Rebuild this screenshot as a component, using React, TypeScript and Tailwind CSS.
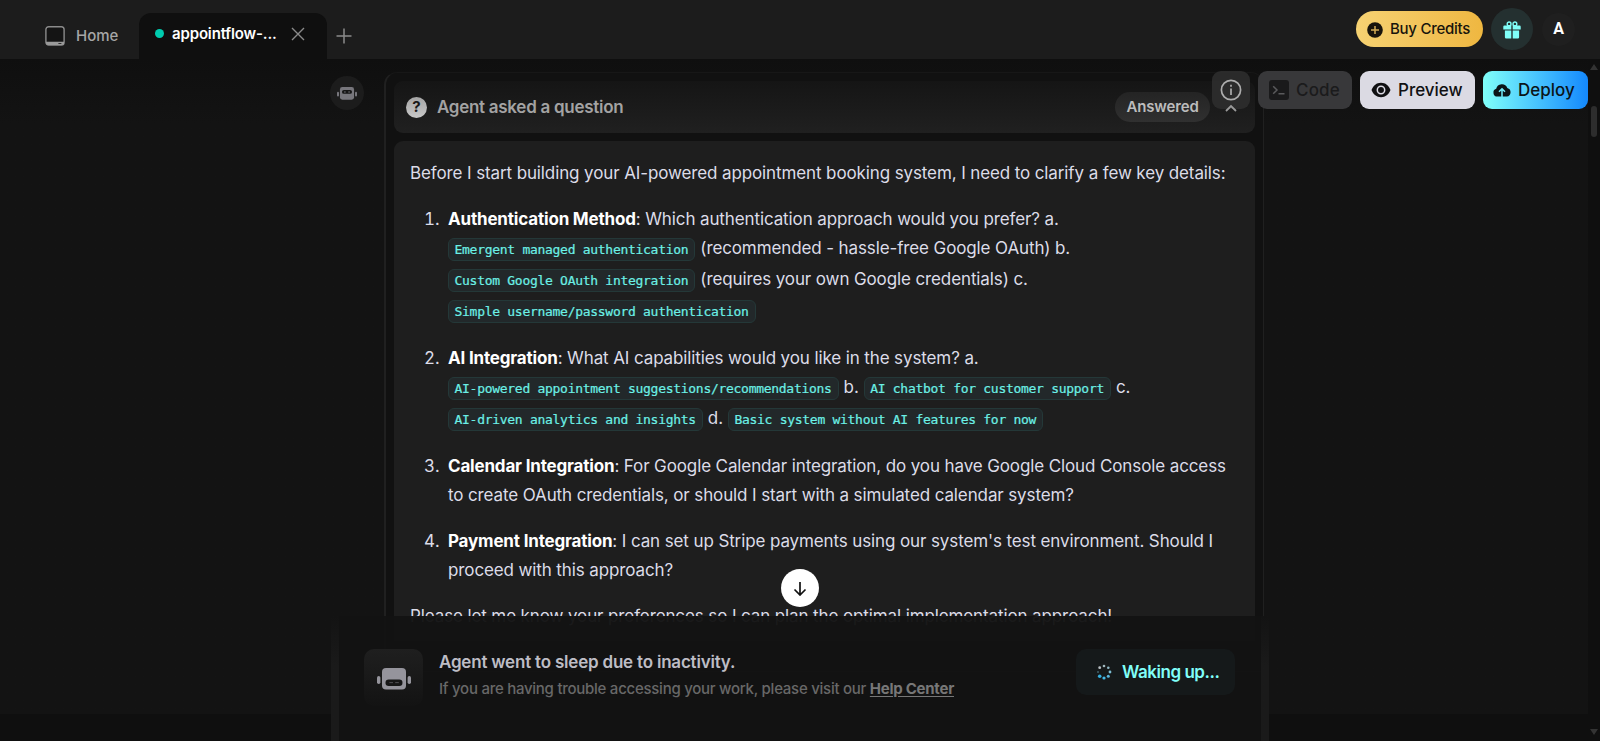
import type { ReactNode } from "react";

const Code = ({ children }: { children: ReactNode }) => (
  <code className="inline-flex h-[23px] items-center rounded-md border border-[#243838] bg-[#22282a] pr-1.5 pl-[5.5px] font-['DejaVu_Sans_Mono',monospace] text-[13px] leading-none tracking-[-0.285px] text-[#6cf0e6] [-webkit-text-stroke:0.2px_#6cf0e6]">
    {children}
  </code>
);

const Row = ({ children }: { children: ReactNode }) => (
  <div className="flex h-[29px] items-center whitespace-pre">{children}</div>
);

const CodeRow = ({ children }: { children: ReactNode }) => (
  <div className="flex h-[31px] items-center gap-[5px] whitespace-pre [&>span]:-translate-y-px">{children}</div>
);

const Item = ({ n, children }: { n: number; children: ReactNode }) => (
  <li className="flex">
    <span className="flex h-[29px] w-[38px] items-center pl-[14px] tabular-nums">{n}.</span>
    <div>{children}</div>
  </li>
);

const Strong = ({ children }: { children: ReactNode }) => (
  <strong className="font-bold tracking-[-0.18px] text-white">{children}</strong>
);

const Robot = ({ className, sleeping }: { className: string; sleeping?: boolean }) => (
  <svg viewBox="0 0 34 22" className={className} fill="currentColor">
    <rect x="0" y="8" width="3.4" height="8" rx="1.7" />
    <rect x="30.6" y="8" width="3.4" height="8" rx="1.7" />
    <rect x="5" y="0" width="24" height="21.5" rx="4" />
    <rect x="8.5" y={sleeping ? 11.5 : 5} width="17" height="6.5" rx="3.2" fill="#161616" />
    {sleeping ? (
      <g>
        <rect x="12.4" y="14.2" width="3.6" height="0.9" opacity="0.5" />
        <rect x="18.2" y="14.2" width="3.6" height="0.9" opacity="0.5" />
      </g>
    ) : (
      <g>
        <circle cx="13.5" cy="8.3" r="1.3" />
        <circle cx="20.5" cy="8.3" r="1.3" />
      </g>
    )}
  </svg>
);

const Spinner = () => (
  <svg viewBox="0 0 16 16" className="h-4 w-4">
    <circle cx="8" cy="2" r="1.3" fill="#9fb6bd" />
    <circle cx="12.3" cy="3.7" r="1.3" fill="#8db5c2" />
    <circle cx="14" cy="8" r="1.4" fill="#7bbdd2" />
    <circle cx="12.3" cy="12.3" r="1.5" fill="#58b6dc" />
    <circle cx="8" cy="14" r="1.6" fill="#43b9e6" />
    <circle cx="3.7" cy="12.3" r="1.8" fill="#35b0df" />
    <circle cx="2" cy="8" r="1" fill="#41606b" />
    <circle cx="3.7" cy="3.7" r="1.4" fill="#b9c0c4" />
  </svg>
);

function TopBar() {
  return (
    <header className="flex h-[59px] shrink-0 bg-[#1c1c1c]">
      <div className="flex w-[139px] items-center pt-[13px] pl-[45px]">
        <svg viewBox="0 0 20 20" className="mr-[11px] h-5 w-5">
          <rect x="0.9" y="0.75" width="18.2" height="18.4" rx="2.8" fill="#141414" stroke="#8b8b8b" strokeWidth="1.4" />
          <path d="M1 15.8h18v1.2a2 2 0 0 1-2 2H3a2 2 0 0 1-2-2z" fill="#9a9a9a" />
          <path d="M13.4 17.5h3" stroke="#222" strokeWidth="0.9" />
        </svg>
        <span className="text-[15px] font-medium text-[#a6a6a6]">Home</span>
      </div>
      <div className="mt-[13px] flex w-[188px] items-center rounded-t-[12px] bg-[#0f0f0f] pb-[4px] pl-[16px]">
        <span className="-mt-px h-[9px] w-[9px] rounded-full bg-[#00ccaf]" />
        <span className="mt-px ml-2 w-[119px] text-[15px] font-semibold tracking-[-0.01em] text-white">appointflow-...</span>
        <svg viewBox="0 0 14 14" className="h-[14px] w-[14px]" stroke="#8a8a8a" strokeWidth="1.4">
          <path d="M1 1l12 12M13 1L1 13" />
        </svg>
      </div>
      <svg viewBox="0 0 16 16" className="mt-7 ml-[9px] h-4 w-4" stroke="#8a8a8a" strokeWidth="1.5">
        <path d="M8 .5v15M.5 8h15" />
      </svg>
      <div className="ml-auto flex h-[58px] items-center pr-[25px]">
        <button className="flex h-9 w-[127px] items-center rounded-full bg-linear-to-r from-[#f6d272] to-[#efb740] pl-[11px] text-[15px] font-medium text-[#18140c]">
          <svg viewBox="0 0 16 16" className="mt-px mr-[7px] h-4 w-4">
            <circle cx="8" cy="8" r="7.8" fill="#18140c" />
            <path d="M8 4v8M4 8h8" stroke="#d3ac55" strokeWidth="1.5" />
          </svg>
          <span className="mt-px tracking-[-0.018em]">Buy Credits</span>
        </button>
        <div className="ml-2 flex h-[42px] w-[42px] items-center justify-center rounded-full bg-[#243030]">
          <svg viewBox="0 0 18 18" className="mt-0.5 h-[18px] w-[18px]" fill="#80fff9">
            <path d="M1.4 4.6h6.9v3.9H.3V5.700a1.100 1.100 0 0 1 1.100-1.100zM9.700 4.600h6.900a1.100 1.100 0 0 1 1.100 1.100v2.800h-8zM1.900 9.500h6.400v8H3.200a1.300 1.300 0 0 1-1.300-1.300zM9.700 9.500h6.400v6.700a1.300 1.300 0 0 1-1.300 1.300H9.700z" />
            <circle cx="6.1" cy="2.900" r="1.900" fill="none" stroke="#80fff9" strokeWidth="1.400" />
            <circle cx="11.900" cy="2.900" r="1.900" fill="none" stroke="#80fff9" strokeWidth="1.400" />
          </svg>
        </div>
        <div className="ml-[9px] flex h-[33px] w-[33px] items-center justify-center rounded-full bg-[#1f1f1f] text-[16px] font-bold text-white">
          <span className="font-['Roboto',sans-serif]">A</span>
        </div>
      </div>
    </header>
  );
}

function Toolbar() {
  return (
    <div className="absolute top-[71px] right-3 flex h-[38px] gap-2 text-[17px] font-medium">
      <button className="flex w-[38px] items-center justify-center rounded-[9px] bg-[#2c2c2c]/95">
        <svg viewBox="0 0 22 22" className="h-[22px] w-[22px]" fill="none" stroke="#adadad" strokeWidth="1.7">
          <circle cx="11" cy="11" r="9.6" />
          <path d="M11 9.5v6.500M11 5.800v2" />
        </svg>
      </button>
      <button className="flex w-[94px] items-center rounded-[9px] bg-[#38383a] pl-[11px] text-[#1b1b1c]">
        <svg viewBox="0 0 20 20" className="mr-[7px] h-5 w-5">
          <rect width="20" height="20" rx="3" fill="#1a1a1b" />
          <path d="M4.2 6.2L8 10l-3.800 3.800M9.500 13.800h6" fill="none" stroke="#5a5a5c" strokeWidth="1.500" />
        </svg>
        <span className="mt-0.5 tracking-[0.01em]">Code</span>
      </button>
      <button className="flex w-[115px] items-center rounded-[9px] bg-[#dbdae3] pl-[11px] text-[#101012]">
        <svg viewBox="0 0 20 16" className="mr-[7px] h-4 w-5">
          <path d="M10 .8c4.400 0 7.800 2.800 9.500 7.200-1.700 4.400-5.100 7.200-9.500 7.200S2.200 12.400.5 8C2.200 3.600 5.600.8 10 .8z" fill="#101012" />
          <circle cx="10" cy="8" r="3.700" fill="#101012" stroke="#dbdae3" strokeWidth="1.500" />
        </svg>
        <span className="mt-0.5">Preview</span>
      </button>
      <button className="flex w-[105px] items-center rounded-[9px] bg-linear-to-r from-[#80fff9] to-[#1488fc] pl-[10px] text-[#0b1418]">
        <svg viewBox="0 0 18 14" className="mr-[7px] h-[14px] w-[18px]">
          <path d="M4.300 13.600A4 4 0 0 1 3.200 5.800 5.800 5.800 0 0 1 14.300 5a4.400 4.400 0 0 1-.5 8.600z" fill="#0b1418" />
          <path d="M9 14V6M6 8.800l3-3 3 3" fill="none" stroke="#72ecfa" strokeWidth="1.500" />
        </svg>
        <span className="mt-0.5">Deploy</span>
      </button>
    </div>
  );
}

function QuestionCard() {
  return (
    <section className="ml-5 h-[600px] w-[880px] rounded-t-[13px] border border-l-2 border-[#202020] border-t-[#171717] bg-[#111111] px-2 pt-2">
      <div className="flex h-[52px] items-center rounded-[9px] bg-linear-to-b from-[#151515] to-[#202020] pl-[12px]">
        <div className="flex h-[21px] w-[21px] items-center justify-center rounded-full bg-linear-to-b from-[#a5a5a5] to-[#c8c8c8] text-[15px] font-bold text-[#181818]">?</div>
        <h2 className="mt-0.5 ml-[10px] text-[17px] font-semibold tracking-[-0.28px] text-[#a3a3a3]">Agent asked a question</h2>
        <span className="ml-auto flex h-[30px] w-[95px] items-center justify-center rounded-full bg-linear-to-b from-[#242424] to-[#303030] text-[15px] font-semibold tracking-[-0.15px] text-[#bcbcbc]">Answered</span>
        <span className="w-[45px]" />
      </div>
      <div className="mt-2 h-[500px] rounded-t-[9px] bg-[#1e1e1e] pt-[18px] pl-4 text-[17px] tracking-[-0.115px] text-[#dcdce8]">
        <Row>Before I start building your AI-powered appointment booking system, I need to clarify a few key details:</Row>
        <ol className="mt-[17px] flex flex-col gap-[17px]">
          <Item n={1}>
            <Row><Strong>Authentication Method</Strong>: Which authentication approach would you prefer? a.</Row>
            <CodeRow><Code>Emergent managed authentication</Code><span>(recommended - hassle-free Google OAuth) b.</span></CodeRow>
            <CodeRow><Code>Custom Google OAuth integration</Code><span>(requires your own Google credentials) c.</span></CodeRow>
            <CodeRow><Code>Simple username/password authentication</Code></CodeRow>
          </Item>
          <Item n={2}>
            <Row><Strong>AI Integration</Strong>: What AI capabilities would you like in the system? a.</Row>
            <CodeRow><Code>AI-powered appointment suggestions/recommendations</Code><span>b.</span><Code>AI chatbot for customer support</Code><span>c.</span></CodeRow>
            <CodeRow><Code>AI-driven analytics and insights</Code><span>d.</span><Code>Basic system without AI features for now</Code></CodeRow>
          </Item>
          <Item n={3}>
            <Row><Strong>Calendar Integration</Strong>: For Google Calendar integration, do you have Google Cloud Console access</Row>
            <Row>to create OAuth credentials, or should I start with a simulated calendar system?</Row>
          </Item>
          <Item n={4}>
            <Row><Strong>Payment Integration</Strong>: I can set up Stripe payments using our system's test environment. Should I</Row>
            <Row>proceed with this approach?</Row>
          </Item>
        </ol>
        <div className="mt-[17px]">
          <Row>Please let me know your preferences so I can plan the optimal implementation approach!</Row>
        </div>
      </div>
    </section>
  );
}

function SleepPanel() {
  return (
    <div className="absolute top-[616px] left-[331px] flex h-[125px] w-[938px] bg-[#131313]/90">
      <div className="w-2 bg-linear-to-b from-[#131313] to-[#1a1a1a] to-40%" />
      <div className="flex flex-1 items-start bg-[#131313]/60 px-[25px] pt-[33px]">
        <div className="flex h-[57px] w-[59px] items-center justify-center rounded-[10px] bg-linear-to-b from-[#1f1f1f] to-[#131313]">
          <Robot sleeping className="mt-0.5 h-[22px] w-[34px] text-[#95949c]" />
        </div>
        <div className="ml-4">
          <p className="mt-px h-6 text-[17px] leading-6 font-semibold tracking-[-0.2px] text-[#bdbdc5]">Agent went to sleep due to inactivity.</p>
          <p className="mt-[3px] text-[15px] leading-6 font-medium tracking-[-0.26px] text-[#686868]">
            If you are having trouble accessing your work, please visit our{" "}
            <a className="font-bold text-[#777] underline underline-offset-2">Help Center</a>
          </p>
        </div>
        <button className="ml-auto flex h-[46px] w-[159px] -translate-x-px items-center rounded-[10px] bg-[#15191a] pl-5 text-[17px] font-semibold text-[#80fff9]">
          <Spinner />
          <span className="mt-0.5 ml-[10px] tracking-[-0.027em]">Waking up...</span>
        </button>
      </div>
      <div className="w-2 bg-linear-to-b from-[#131313] to-[#1a1a1a] to-40%" />
    </div>
  );
}

export default function App() {
  return (
    <div className="relative flex h-[741px] w-[1600px] flex-col overflow-hidden bg-[#131313] font-['Inter',sans-serif]">
      <TopBar />
      <div className="flex h-[682px] overflow-hidden">
        <main className="flex h-[655px] w-[1588px] bg-linear-to-b from-[#0f0f0f] to-[#131313] to-10% pt-[13px] pl-[330px]">
          <div className="mt-1 flex h-[34px] w-[34px] shrink-0 items-center justify-center rounded-full bg-[#1c1c1c]">
            <Robot className="h-[13px] w-[20px] text-[#77767c]" />
          </div>
          <QuestionCard />
        </main>
        <aside className="flex w-3 flex-col items-center bg-[#0f0f0f] pt-[5px]">
          <svg viewBox="0 0 8 6" className="h-1.5 w-2" fill="#333"><path d="M4 0l4 6H0z" /></svg>
          <div className="mt-9 h-[31px] w-1.5 rounded-full bg-[#2d2d2d]" />
          <svg viewBox="0 0 8 6" className="mt-auto mb-1.5 h-1.5 w-2" fill="#333"><path d="M4 6L0 0h8z" /></svg>
        </aside>
      </div>
      <div className="absolute top-[714px] left-0 h-[27px] w-[1588px] bg-[#0f0f0f]" />
      <SleepPanel />
      <Toolbar />
      <svg viewBox="0 0 12 8" className="absolute top-[104px] left-[1225px] h-2 w-3" fill="none" stroke="#9a9a9a" strokeWidth="1.8"><path d="M1 7l5-5 5 5" /></svg>
      <button className="absolute top-[569px] left-[781px] flex h-[38px] w-[38px] items-center justify-center rounded-full bg-white">
        <svg viewBox="0 0 14 14" className="mt-px h-[14px] w-[14px]" fill="none" stroke="#111" strokeWidth="1.700"><path d="M7 0v13M1.500 7.500L7 13l5.500-5.500" /></svg>
      </button>
    </div>
  );
}
